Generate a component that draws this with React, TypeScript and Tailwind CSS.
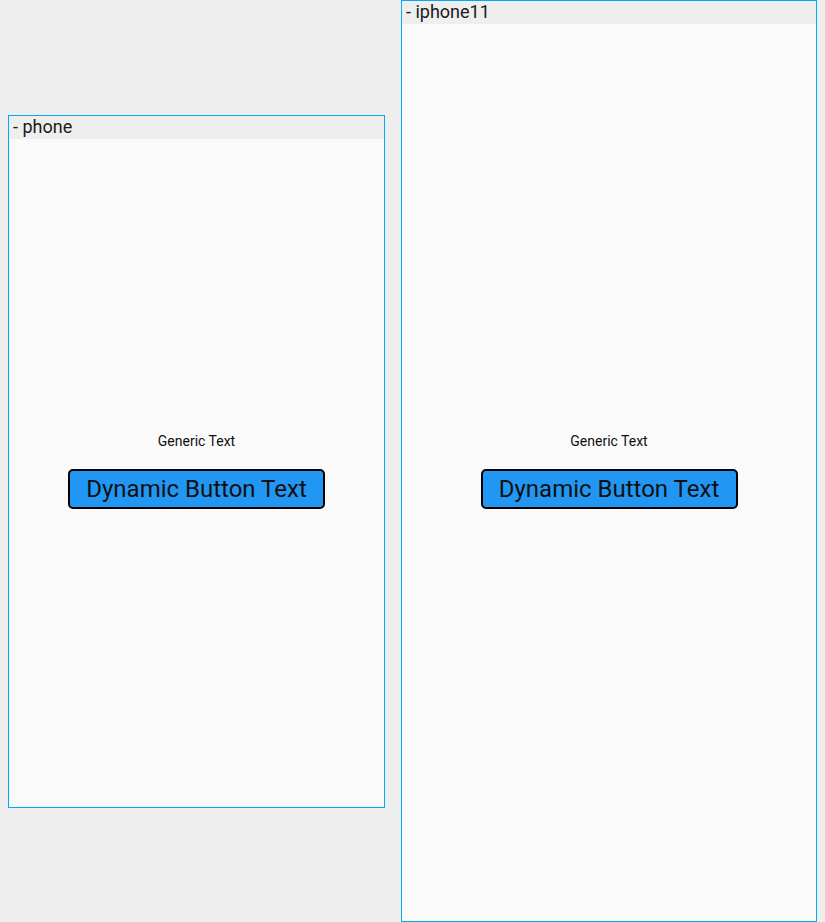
import React from "react";

function Frame({ label, className }: { label: string; className: string }) {
  return (
    <div className={`flex flex-col border border-[#03a9f4] bg-[#fafafa] ${className}`}>
      <div className="h-[23px] bg-[#eeeeee] pl-[4px] text-[18px] leading-[21px] text-[#1a1a1a]">{label}</div>
      <div className="flex flex-1 flex-col items-center justify-center pb-[4px]">
        <div className="text-[14px] leading-[16px] text-[#111]">Generic Text</div>
        <button className="mt-[20px] h-[40px] w-[257px] rounded-[5px] border-2 border-black bg-[#2196f3] text-[24px] leading-[28px] text-[#111]">
          Dynamic Button Text
        </button>
      </div>
    </div>
  );
}

export default function App() {
  return (
    <div
      className="flex h-[922px] w-[825px] items-center bg-[#eeeeee]"
      style={{ fontFamily: "Roboto, 'Noto Sans', sans-serif" }}
    >
      <Frame label="- phone" className="ml-[8px] h-[693px] w-[377px]" />
      <Frame label="- iphone11" className="ml-[16px] h-[922px] w-[416px]" />
    </div>
  );
}
